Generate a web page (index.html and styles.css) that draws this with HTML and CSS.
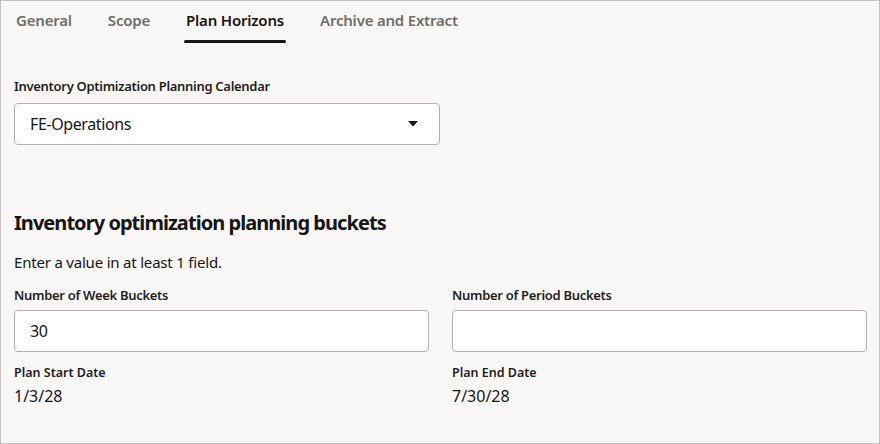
FILE: index.html
```html
<!DOCTYPE html>
<html lang="en">
<head>
<meta charset="utf-8">
<title>Plan Horizons</title>
<link rel="stylesheet" href="styles.css">
</head>
<body>
<div class="frame">
  <nav class="tabs">
    <div class="tab"><span class="tab-label">General</span><span class="tab-bar"></span></div>
    <div class="tab"><span class="tab-label">Scope</span><span class="tab-bar"></span></div>
    <div class="tab active"><span class="tab-label">Plan Horizons</span><span class="tab-bar"></span></div>
    <div class="tab"><span class="tab-label">Archive and Extract</span><span class="tab-bar"></span></div>
  </nav>
  <main class="content">
    <div class="field calendar">
      <div class="label">Inventory Optimization Planning Calendar</div>
      <div class="box select">
        <span class="value">FE-Operations</span>
        <svg class="caret" width="10" height="6" viewBox="0 0 10 6"><path d="M0 0h10L5 5.5z" fill="#161513"/></svg>
      </div>
    </div>
    <h2 class="heading">Inventory optimization planning buckets</h2>
    <p class="hint">Enter a value in at least 1 field.</p>
    <div class="grid">
      <div class="field">
        <div class="label tight">Number of Week Buckets</div>
        <div class="box"><span class="value">30</span></div>
      </div>
      <div class="field">
        <div class="label tight">Number of Period Buckets</div>
        <div class="box"><span class="value"></span></div>
      </div>
      <div class="readonly">
        <div class="small-label">Plan Start Date</div>
        <div class="ro-value">1/3/28</div>
      </div>
      <div class="readonly">
        <div class="small-label">Plan End Date</div>
        <div class="ro-value">7/30/28</div>
      </div>
    </div>
  </main>
</div>
</body>
</html>
```

FILE: styles.css
```css
* { box-sizing: border-box; }
html, body { margin: 0; padding: 0; }
body {
  font-family: "Noto Sans", "Liberation Sans", sans-serif;
  color: #161513;
  background: #ffffff;
}
.frame {
  width: 880px;
  height: 444px;
  border: 1px solid #c4c3c0;
  background: #f9f8f6;
  overflow: hidden;
}
.tabs {
  display: flex;
  gap: 32px;
  padding-left: 13px;
}
.tab {
  display: flex;
  flex-direction: column;
  padding: 0 2px;
}
.tab-label {
  font-size: 15px;
  font-weight: 600;
  line-height: 39px;
  color: #6f6d6a;
  letter-spacing: -0.2px;
}
.tab-bar {
  height: 3px;
  margin: 0 -2px;
  border-radius: 2px;
}
.tab.active .tab-label { color: #161513; }
.tab.active .tab-bar { background: #161513; }

.content {
  padding: 0 12px 0 13px;
}
.field .label {
  font-size: 13px;
  font-weight: 600;
  line-height: 16px;
  color: #1f1e1c;
  letter-spacing: -0.3px;
  margin-bottom: 9px;
}
.field .label.tight { margin-bottom: 7px; }
.calendar { margin-top: 35px; width: 426px; }
.box {
  height: 42px;
  border: 1px solid #b4b2ae;
  border-radius: 4px;
  background: #ffffff;
  display: flex;
  align-items: center;
  padding: 0 15px;
}
.value {
  font-size: 16px;
  color: #161513;
  letter-spacing: -0.4px;
  flex: 1;
}
.select { padding-right: 21px; }
.caret { display: block; }
.heading {
  margin: 66px 0 0;
  font-size: 20px;
  font-weight: 700;
  line-height: 24px;
  letter-spacing: -0.95px;
  color: #161513;
}
.hint {
  margin: 17px 0 0;
  font-size: 15px;
  line-height: 20px;
  letter-spacing: -0.2px;
  color: #161513;
}
.grid {
  margin-top: 15px;
  display: grid;
  grid-template-columns: 1fr 1fr;
  column-gap: 23px;
  row-gap: 13px;
}
.small-label {
  font-size: 12.5px;
  font-weight: 600;
  line-height: 16px;
  color: #1f1e1c;
}
.ro-value {
  margin-top: 5px;
  font-size: 16px;
  line-height: 20px;
  color: #161513;
}
```
